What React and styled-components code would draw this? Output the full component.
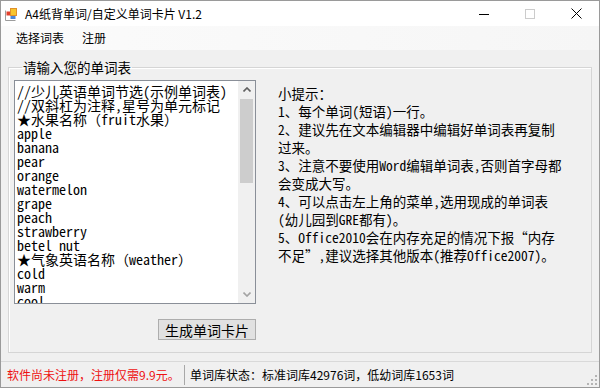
import React from "react";
import styled, { createGlobalStyle } from "styled-components";

const SONG = `"Noto Sans Mono CJK SC", "Noto Sans CJK SC", "Liberation Mono", monospace`;
const UI = `"Noto Sans CJK SC", "Liberation Sans", sans-serif`;

const WORDS = [
  "//少儿英语单词节选(示例单词表)",
  "//双斜杠为注释,星号为单元标记",
  "★水果名称（fruit水果）",
  "apple",
  "banana",
  "pear",
  "orange",
  "watermelon",
  "grape",
  "peach",
  "strawberry",
  "betel nut",
  "★气象英语名称（weather）",
  "cold",
  "warm",
  "cool",
  "hot",
  "sunny",
  "cloudy",
  "rainy",
  "snowy",
  "windy",
  "★动物名称（animal）",
  "dog",
  "cat",
  "rabbit",
  "tiger",
  "panda",
  "monkey",
  "elephant",
  "bird",
  "fish",
  "duck",
  "horse",
].join("\n");

const HINTS = [
  "小提示：",
  "1、每个单词(短语)一行。",
  "2、建议先在文本编辑器中编辑好单词表再复制",
  "过来。",
  "3、注意不要使用Word编辑单词表,否则首字母都",
  "会变成大写。",
  "4、可以点击左上角的菜单,选用现成的单词表",
  "(幼儿园到GRE都有)。",
  "5、Office2010会在内存充足的情况下报“内存",
  "不足”,建议选择其他版本(推荐Office2007)。",
];

const AppIcon = () => (
  <svg width="13" height="13" viewBox="0 0 13 13">
    <path d="M0.5 2.5 V12.5 H10.5" fill="none" stroke="#9c9c9c" />
    <rect x="1.5" y="3.5" width="4" height="4" fill="#e2402c" />
    <rect x="5.5" y="0.5" width="6" height="7" fill="#f7c52e" stroke="#e0902a" />
    <rect x="5.5" y="8" width="5" height="3" fill="#4a86d8" />
  </svg>
);

const MinIcon = () => (
  <svg width="10" height="10" viewBox="0 0 10 10">
    <line x1="0" y1="5.5" x2="10" y2="5.5" stroke="#000" />
  </svg>
);

const MaxIcon = () => (
  <svg width="10" height="10" viewBox="0 0 10 10">
    <rect x="0.5" y="0.5" width="9" height="9" fill="none" stroke="#cccccc" />
  </svg>
);

const CloseIcon = () => (
  <svg width="11" height="11" viewBox="0 0 11 11">
    <path d="M0.5 0.5 L10.5 10.5 M10.5 0.5 L0.5 10.5" stroke="#000" strokeWidth="1" />
  </svg>
);

const Chevron = ({ up, color }) => (
  <svg width="8" height="5" viewBox="0 0 8 5">
    <polyline
      points={up ? "0.5,4.5 4,1 7.5,4.5" : "0.5,0.5 4,4 7.5,0.5"}
      fill="none"
      stroke={color}
      strokeWidth="1.6"
    />
  </svg>
);

const SizeGrip = () => (
  <svg width="12" height="12" viewBox="0 0 12 12">
    {[
      [8, 0],
      [4, 4],
      [8, 4],
      [0, 8],
      [4, 8],
      [8, 8],
    ].map(([x, y]) => (
      <rect key={`${x}-${y}`} x={x + 1} y={y + 1} width="2" height="2" fill="#b4b4b4" />
    ))}
  </svg>
);

const App = () => (
  <>
    <GlobalStyle />
    <Window>
      <TitleBar>
        <IconSlot>
          <AppIcon />
        </IconSlot>
        <Title>A4纸背单词/自定义单词卡片 V1.2</Title>
        <Controls>
          <ControlButton>
            <MinIcon />
          </ControlButton>
          <ControlButton>
            <MaxIcon />
          </ControlButton>
          <ControlButton>
            <CloseIcon />
          </ControlButton>
        </Controls>
      </TitleBar>

      <MenuBar>
        <MenuItem>选择词表</MenuItem>
        <MenuItem>注册</MenuItem>
      </MenuBar>

      <Body>
        <GroupBox>
          <Legend>请输入您的单词表</Legend>
          <LeftColumn>
            <TextBox>
              <WordInput defaultValue={WORDS} spellCheck={false} />
              <ScrollBar>
                <ScrollArrow>
                  <Chevron up color="#606060" />
                </ScrollArrow>
                <ScrollTrack>
                  <ScrollThumb />
                </ScrollTrack>
                <ScrollArrow>
                  <Chevron color="#a3a3a3" />
                </ScrollArrow>
              </ScrollBar>
            </TextBox>
            <Button>生成单词卡片</Button>
          </LeftColumn>

          <Hints>
            {HINTS.map((line) => (
              <HintLine key={line}>{line}</HintLine>
            ))}
          </Hints>
        </GroupBox>
      </Body>

      <StatusBar>
        <StatusLabel width={183} color="#ee1111">
          软件尚未注册，注册仅需9.9元。
        </StatusLabel>
        <StatusDivider />
        <StatusLabel>单词库状态：标准词库42976词，低幼词库1653词</StatusLabel>
        <GripSlot>
          <SizeGrip />
        </GripSlot>
      </StatusBar>
    </Window>
  </>
);

const GlobalStyle = createGlobalStyle`
  html, body {
    margin: 0;
    padding: 0;
    background: #f0f0f0;
  }

  body {
    font-family: ${UI};
    color: #000;
  }
`;

const Window = styled.div`
  width: 600px;
  height: 388px;
  box-sizing: border-box;
  border: 1px solid #9a9a9a;
  display: flex;
  flex-direction: column;
  background: #f0f0f0;
  overflow: hidden;
`;

const TitleBar = styled.div`
  height: 25px;
  flex: none;
  display: flex;
  align-items: center;
  background: #fff;
`;

const IconSlot = styled.div`
  display: flex;
  margin: 1px 0 0 4px;
`;

const Title = styled.div`
  margin-left: 7px;
  font-size: 12px;
  line-height: 16px;
  white-space: nowrap;
`;

const Controls = styled.div`
  margin-left: auto;
  display: flex;
  align-self: stretch;
`;

const ControlButton = styled.div`
  width: 46px;
  display: flex;
  align-items: center;
  justify-content: center;
`;

const MenuBar = styled.div`
  height: 24px;
  flex: none;
  display: flex;
  align-items: center;
  padding-left: 6px;
  background: linear-gradient(to right, #fbfbfb, #f6f6f6);
`;

const MenuItem = styled.div`
  padding: 0 9px;
  font-size: 12px;
  line-height: 22px;
`;

const Body = styled.div`
  flex: 1;
  display: flex;
  padding: 10px 7px 8px;
  min-height: 0;
`;

const GroupBox = styled.fieldset`
  flex: 1;
  min-width: 0;
  margin: 0;
  padding: 6px 0 12px 5px;
  border: 1px solid #d5d5d5;
  box-shadow: inset 1px 1px 0 #fff;
  display: flex;
`;

const Legend = styled.legend`
  margin-left: 8px;
  padding: 0 1px;
  font-size: 13.5px;
  line-height: 14px;
  white-space: nowrap;
`;

const LeftColumn = styled.div`
  width: 242px;
  flex: none;
  display: flex;
  flex-direction: column;
  align-items: flex-end;
`;

const TextBox = styled.div`
  width: 100%;
  height: 224px;
  box-sizing: border-box;
  border: 1px solid #8a8f98;
  background: #fff;
  display: flex;
`;

const WordInput = styled.textarea`
  flex: 1;
  min-width: 0;
  margin: 0;
  border: none;
  outline: none;
  resize: none;
  overflow: hidden;
  padding: 3px 2px;
  font-family: ${SONG};
  font-size: 14px;
  line-height: 14px;
  white-space: pre;
  color: #000;
  background: #fff;
`;

const ScrollBar = styled.div`
  width: 17px;
  flex: none;
  display: flex;
  flex-direction: column;
  background: #f0f0f0;
`;

const ScrollArrow = styled.div`
  height: 17px;
  flex: none;
  display: flex;
  align-items: center;
  justify-content: center;
`;

const ScrollTrack = styled.div`
  flex: 1;
  display: flex;
  flex-direction: column;
  align-items: center;
  padding-top: 1px;
`;

const ScrollThumb = styled.div`
  width: 13px;
  height: 84px;
  background: #cdcdcd;
`;

const Button = styled.button`
  margin-top: 15px;
  width: 98px;
  height: 21px;
  padding: 0;
  border: 1px solid #adadad;
  background: #e1e1e1;
  font-family: ${SONG};
  font-size: 14px;
  line-height: 18px;
  color: #000;
`;

const Hints = styled.div`
  margin-left: 22px;
  padding-top: 4px;
  display: flex;
  flex-direction: column;
  font-family: ${SONG};
  font-size: 13.5px;
  line-height: 18px;
`;

const HintLine = styled.div`
  white-space: nowrap;
`;

const StatusBar = styled.div`
  height: 25px;
  flex: none;
  display: flex;
  align-items: center;
  border-top: 1px solid #d9d9d9;
  background: #f0f0f0;
`;

const StatusLabel = styled.div`
  width: ${(props) => (props.width ? `${props.width}px` : "auto")};
  box-sizing: border-box;
  flex: none;
  padding-left: ${(props) => (props.width ? "6px" : "5px")};
  font-size: 12px;
  line-height: 16px;
  white-space: nowrap;
  color: ${(props) => props.color || "#000"};
`;

const StatusDivider = styled.div`
  width: 1px;
  height: 20px;
  background: #a8a8a8;
`;

const GripSlot = styled.div`
  margin-left: auto;
  align-self: flex-end;
  display: flex;
  margin-right: 1px;
  margin-bottom: 1px;
`;

export default App;
